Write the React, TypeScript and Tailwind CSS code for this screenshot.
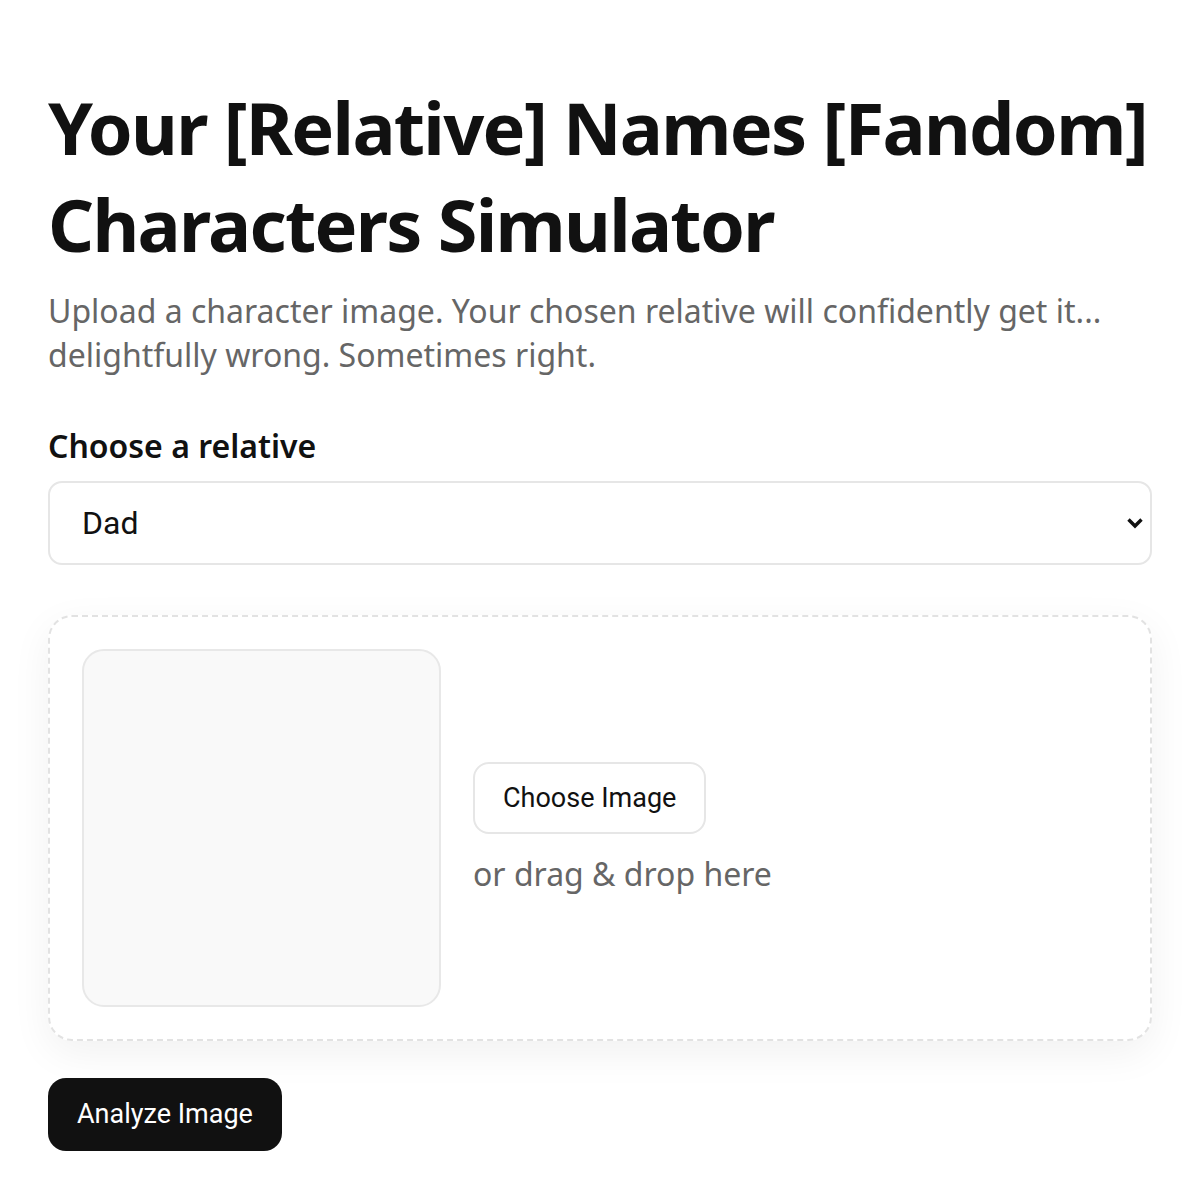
export default function App() {
  return (
    <main className="min-h-[1200px] bg-white px-[48px] pt-[79px] font-['Noto_Sans',sans-serif] text-[#111]">
      <h1 className="text-[72px] font-bold leading-[96.5px] tracking-[-1.7px]">
        Your [Relative] Names [Fandom] Characters Simulator
      </h1>
      <p className="mt-[17px] text-[32px] leading-[44px] text-[#666]">
        Upload a character image. Your chosen relative will confidently get it... delightfully wrong. Sometimes right.
      </p>

      <label className="mt-[49px] block text-[32px] font-semibold leading-[40px]">Choose a relative</label>
      <div className="relative mt-[15px]">
        <select className="h-[84px] w-full appearance-none rounded-[14px] border-2 border-[#e6e6e6] bg-white px-[32px] font-['Roboto',sans-serif] text-[32px] text-[#111] outline-none">
          <option>Dad</option>
          <option>Mom</option>
          <option>Grandma</option>
        </select>
        <svg
          className="pointer-events-none absolute right-[8px] top-1/2 h-[18px] w-[18px] -translate-y-1/2"
          viewBox="0 0 18 18"
          fill="none"
          stroke="#111"
          strokeWidth="3.4"
        >
          <path d="M2.5 5.5L9 12l6.5-6.5" />
        </svg>
      </div>

      <section className="mt-[50px] flex items-center gap-[32px] rounded-[24px] border-2 border-dashed border-[#e2e2e2] p-[32px] shadow-[0_12px_40px_rgba(0,0,0,0.06)]">
        <div className="h-[358px] w-[359px] shrink-0 rounded-[22px] border-2 border-[#e8e8e8] bg-[#f9f9f9]" />
        <div className="flex flex-col items-start gap-[20px]">
          <button className="h-[72px] rounded-[16px] border-2 border-[#e6e6e6] bg-white px-[28px] font-['Roboto',sans-serif] text-[27px] text-[#111]">
            Choose Image
          </button>
          <p className="text-[32px] leading-[40px] text-[#666]">or drag &amp; drop here</p>
        </div>
      </section>

      <button className="mt-[37px] h-[73px] rounded-[18px] bg-[#111] px-[29px] font-['Roboto',sans-serif] text-[27px] text-white">
        Analyze Image
      </button>
    </main>
  );
}
